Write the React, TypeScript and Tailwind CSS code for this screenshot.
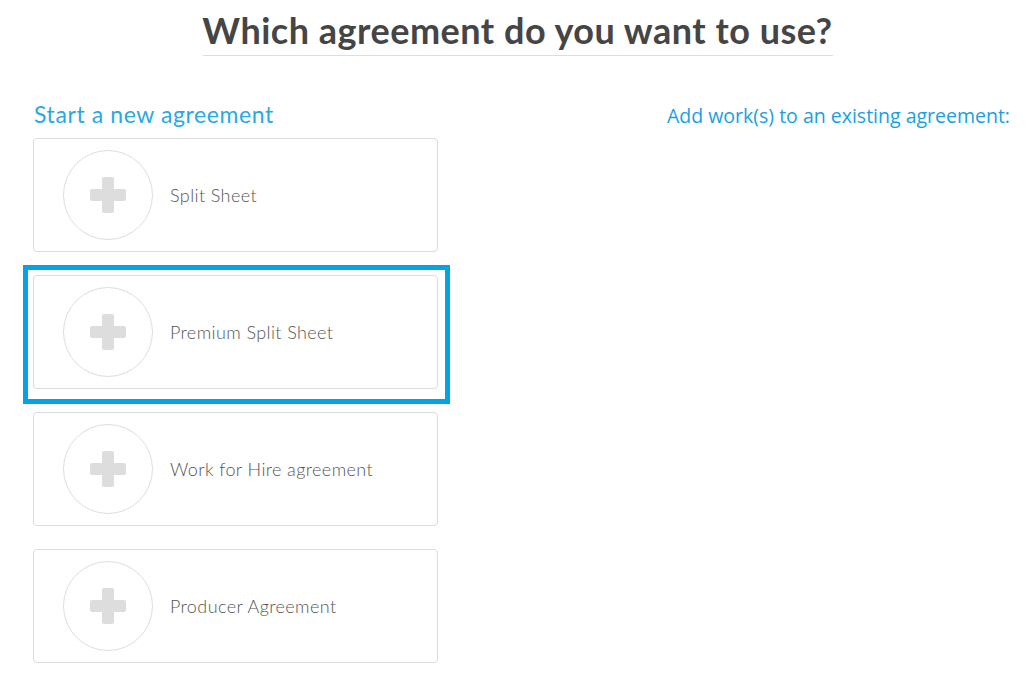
import React from "react";

const items = ["Split Sheet", "Premium Split Sheet", "Work for Hire agreement", "Producer Agreement"];

function Card({ label, highlight }: { label: string; highlight?: boolean }) {
  return (
    <div className="relative">
      {highlight && (
        <div className="pointer-events-none absolute left-[-10px] top-[-10px] h-[139px] w-[427px] border-[5px] border-[#03a4e3]" />
      )}
      <div className="flex h-[114px] w-[405px] items-center rounded-[4px] border border-[#dcdcdc] bg-white pl-[29px]">
        <div className="relative flex h-[90px] w-[90px] shrink-0 items-center justify-center rounded-full border border-[#dedede]">
          <div className="absolute h-[36px] w-[12px] rounded-[2px] bg-[#dddddd]" />
          <div className="absolute h-[12px] w-[36px] rounded-[2px] bg-[#dddddd]" />
        </div>
        <span className="ml-[17px] text-[18px] font-light tracking-[0.4px] text-[#555555]" style={{ fontFamily: "Lato, 'Open Sans', sans-serif" }}>
          {label}
        </span>
      </div>
    </div>
  );
}

export default function App() {
  return (
    <div className="min-h-[694px] w-[1035px] bg-white" style={{ fontFamily: "Lato, sans-serif" }}>
      <div className="flex flex-col items-center pt-[8px]">
        <h1 className="text-[36px] font-bold leading-[44px] tracking-[0.5px] text-[#454545]" style={{ fontFamily: "Lato, sans-serif" }}>
          Which agreement do you want to use?
        </h1>
        <div className="mt-[3px] h-px w-[630px] bg-[#dddddd]" />
      </div>
      <div className="mt-[44px] flex pl-[33px]">
        <div className="w-[405px]">
          <div className="ml-[1px] text-[23px] leading-[28px] tracking-[0.6px] text-[#29a9e1]">Start a new agreement</div>
          <div className="mt-[10px] flex flex-col gap-[23px]">
            {items.map((it, i) => (
              <Card key={it} label={it} highlight={i === 1} />
            ))}
          </div>
        </div>
        <div className="ml-[229px] pt-[2px] text-[19.5px] leading-[28px] text-[#1a9fe0]" style={{ fontFamily: "'Open Sans', sans-serif" }}>
          Add work(s) to an existing agreement:
        </div>
      </div>
    </div>
  );
}
